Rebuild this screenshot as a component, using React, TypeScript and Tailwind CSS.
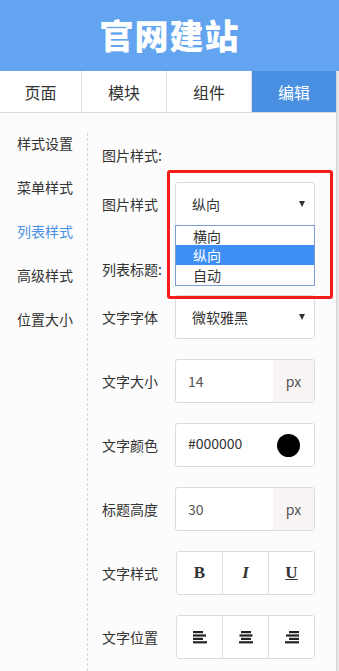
import React from "react";

const font = { fontFamily: '"Noto Sans CJK SC", "Noto Sans", sans-serif' };

function AlignIcon({ kind }: { kind: "left" | "center" | "right" }) {
  const lens = [10, 13, 10, 14];
  const W = 14;
  return (
    <svg width="14" height="13" viewBox="0 0 14 13">
      {lens.map((l, i) => {
        const x = kind === "left" ? 0 : kind === "center" ? (W - l) / 2 : W - l;
        return <rect key={i} x={x} y={i * 3.4} width={l} height={2.2} fill="#222" />;
      })}
    </svg>
  );
}

function Row({ label, children }: { label: string; children: React.ReactNode }) {
  return (
    <div className="flex items-center h-[44px]">
      <div className="w-[73px] text-[14px] text-[#333]">{label}</div>
      {children}
    </div>
  );
}

function Arrow() {
  return (
    <span className="ml-auto mr-[9px] inline-block w-0 h-0 border-l-[3.5px] border-r-[3.5px] border-t-[6px] border-l-transparent border-r-transparent border-t-[#333]" />
  );
}

export default function App() {
  const sidebar = ["样式设置", "菜单样式", "列表样式", "高级样式", "位置大小"];
  const tabs = [
    { t: "页面", w: "w-[82px] border-r" },
    { t: "模块", w: "w-[85px] border-r" },
    { t: "组件", w: "w-[85px] border-r" },
    { t: "编辑", w: "w-[84px]", active: true },
  ];
  return (
    <div className="relative w-[339px] h-[671px] overflow-hidden bg-[#fcfcfc] flex flex-col" style={font}>
      <div className="h-[71px] bg-[#62a4f0] flex items-center justify-center shrink-0">
        <span className="text-white text-[34px] font-black leading-none tracking-[1px] -mt-[2px]">官网建站</span>
      </div>
      <div className="flex flex-1">
        <div className="w-[336px] flex flex-col">
          <div className="flex h-[42px] bg-white border-b border-[#dcdcdc] shrink-0">
            {tabs.map((t) => (
              <div
                key={t.t}
                className={`${t.w} border-[#dcdcdc] flex items-center justify-center text-[16px] ${
                  t.active ? "bg-[#4a90e2] text-white" : "text-[#333]"
                }`}
              >
                {t.t}
              </div>
            ))}
          </div>
          <div className="flex flex-1">
            <div className="w-[88px] mt-[20px] border-r border-dashed border-[#d8d8d8] flex flex-col gap-[24px] pl-[17px]">
              {sidebar.map((s) => (
                <div key={s} className={`h-[20px] leading-[20px] text-[14px] ${s === "列表样式" ? "text-[#4a90e2]" : "text-[#333]"}`}>
                  {s}
                </div>
              ))}
            </div>
            <div className="flex-1 pl-[14px] pt-[32px] flex flex-col">
              <div className="h-[20px] leading-[20px] text-[14px] text-[#333]">图片样式:</div>
              <div className="mt-[17px]">
                <Row label="图片样式">
                  <div className="relative w-[140px]">
                    <div className="h-[44px] w-[140px] bg-white border border-[#dcdcdc] rounded-[3px] flex items-center pl-[16px] text-[14px] text-[#333]">
                      纵向
                      <Arrow />
                    </div>
                    <div className="absolute left-0 top-[43px] w-[140px] bg-white border border-[#7f9cd6] text-[14px] leading-[20px] z-10">
                      <div className="pl-[17px] h-[19px] text-[#333]">横向</div>
                      <div className="pl-[17px] h-[20px] bg-[#3d8ef5] text-white">纵向</div>
                      <div className="pl-[17px] h-[20px] text-[#333]">自动</div>
                    </div>
                  </div>
                </Row>
              </div>
              <div className="mt-[33px] h-[20px] leading-[20px] text-[14px] text-[#333]">列表标题:</div>
              <div className="mt-[16px] flex flex-col gap-[20px]">
                <Row label="文字字体">
                  <div className="h-[44px] w-[140px] bg-white border border-[#dcdcdc] rounded-[3px] flex items-center pl-[16px] text-[14px] text-[#333]">
                    微软雅黑
                    <Arrow />
                  </div>
                </Row>
                <Row label="文字大小">
                  <div className="h-[44px] w-[140px] bg-white border border-[#dcdcdc] rounded-[3px] flex overflow-hidden">
                    <div className="flex-1 flex items-center pl-[12px] text-[14px] text-[#555]">14</div>
                    <div className="w-[41px] bg-[#f7f4f3] flex items-center justify-center text-[14px] text-[#555]">px</div>
                  </div>
                </Row>
                <Row label="文字颜色">
                  <div className="h-[44px] w-[140px] bg-white border border-[#dcdcdc] rounded-[3px] flex items-center pl-[12px] pr-[14px] text-[14px] text-[#333]">
                    <span className="-mt-[4px]">#000000</span>
                    <span className="ml-auto w-[23px] h-[23px] rounded-full bg-black" />
                  </div>
                </Row>
                <Row label="标题高度">
                  <div className="h-[44px] w-[140px] bg-white border border-[#dcdcdc] rounded-[3px] flex overflow-hidden">
                    <div className="flex-1 flex items-center pl-[12px] text-[14px] text-[#555]">30</div>
                    <div className="w-[41px] bg-[#f7f4f3] flex items-center justify-center text-[14px] text-[#555]">px</div>
                  </div>
                </Row>
                <Row label="文字样式">
                  <div className="h-[44px] w-[139px] ml-[1px] bg-white border border-[#dcdcdc] rounded-[3px] flex">
                    <div className="flex-1 border-r border-[#dcdcdc] flex items-center justify-center text-[17px] font-bold text-[#333]" style={{ fontFamily: '"Liberation Serif", serif' }}>B</div>
                    <div className="flex-1 border-r border-[#dcdcdc] flex items-center justify-center text-[17px] font-bold italic text-[#333]" style={{ fontFamily: '"Liberation Serif", serif' }}>I</div>
                    <div className="flex-1 flex items-center justify-center text-[17px] font-bold underline text-[#333]" style={{ fontFamily: '"Liberation Serif", serif' }}>U</div>
                  </div>
                </Row>
                <Row label="文字位置">
                  <div className="h-[44px] w-[139px] ml-[1px] bg-white border border-[#dcdcdc] rounded-[3px] flex">
                    <div className="flex-1 border-r border-[#dcdcdc] flex items-center justify-center"><AlignIcon kind="left" /></div>
                    <div className="flex-1 border-r border-[#dcdcdc] flex items-center justify-center"><AlignIcon kind="center" /></div>
                    <div className="flex-1 flex items-center justify-center"><AlignIcon kind="right" /></div>
                  </div>
                </Row>
              </div>
            </div>
          </div>
        </div>
        <div className="w-[3px] bg-[#e6e6e6] border-l border-[#d6d6d6]" />
      </div>
      <div className="absolute left-[167px] top-[170px] w-[166px] h-[129px] border-[3px] border-[#f71c1c] rounded-[3px] pointer-events-none" />
    </div>
  );
}
